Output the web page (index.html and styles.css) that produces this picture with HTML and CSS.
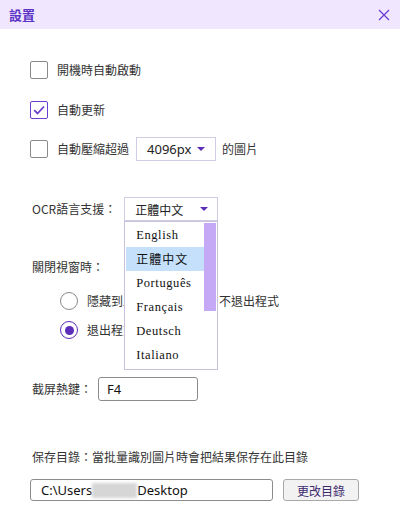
FILE: index.html
```html
<!DOCTYPE html>
<html>
<head>
<meta charset="utf-8">
<link rel="stylesheet" href="styles.css">
</head>
<body>
<div class="win">
  <header class="titlebar">
    <span class="title">設置</span>
    <svg class="close" width="12" height="12" viewBox="0 0 12 12"><path d="M1 1 L11 11 M11 1 L1 11" stroke="#6a3fd0" stroke-width="1.3" fill="none"/></svg>
  </header>
  <main class="content">
    <div class="row r1">
      <span class="cb"></span><span class="lbl">開機時自動啟動</span>
    </div>
    <div class="row r2">
      <span class="cb checked"><svg width="16" height="16" viewBox="0 0 16 16"><path d="M3.2 8.2 L6.5 11.5 L13 4.5" stroke="#6a3fd0" stroke-width="1.8" fill="none"/></svg></span><span class="lbl">自動更新</span>
    </div>
    <div class="row r3">
      <span class="cb"></span><span class="lbl">自動壓縮超過</span>
      <span class="select sel-size"><span class="val">4096px</span><span class="arrow"></span></span>
      <span class="lbl after">的圖片</span>
    </div>
    <div class="row r4">
      <span class="lbl">OCR語言支援：</span>
      <div class="select-wrap">
        <span class="select sel-lang"><span class="val cjk">正體中文</span><span class="arrow"></span></span>
        <ul class="list">
          <li>English</li>
          <li class="hl cjk">正體中文</li>
          <li>Português</li>
          <li>Français</li>
          <li>Deutsch</li>
          <li>Italiano</li>
          <span class="thumb"></span>
        </ul>
      </div>
    </div>
    <div class="row r5"><span class="lbl">關閉視窗時：</span></div>
    <div class="row r6 radio-row">
      <span class="radio"></span><span class="lbl">隱藏到工作列通知區域，不退出程式</span>
    </div>
    <div class="row r7 radio-row">
      <span class="radio on"><span class="dot"></span></span><span class="lbl">退出程式</span>
    </div>
    <div class="row r8">
      <span class="lbl">截屏熱鍵：</span>
      <span class="input hotkey">F4</span>
    </div>
    <div class="row r9"><span class="lbl">保存目錄：當批量識別圖片時會把結果保存在此目錄</span></div>
    <div class="row r10">
      <span class="input path">C:\Users<span class="blur"></span>Desktop</span>
      <span class="btn">更改目錄</span>
    </div>
  </main>
</div>
</body>
</html>
```
FILE: styles.css
```css
* { box-sizing: border-box; }
body {
  margin: 0;
  width: 400px;
  height: 530px;
  background: #fff;
  font-family: "Noto Sans CJK TC", "Noto Sans", sans-serif;
  color: #333;
  font-size: 12px;
}
.titlebar {
  height: 29px;
  background: #f0e7fe;
  display: flex;
  align-items: center;
  justify-content: space-between;
  padding: 0 10px 0 9px;
}
.title {
  color: #5b33c6;
  font-size: 13px;
  font-weight: 700;
}
.close { display: block; }
.content {
  padding-left: 30px;
  display: flex;
  flex-direction: column;
}
.row {
  display: flex;
  align-items: center;
  height: 24px;
}
.r1 { margin-top: 29px; }
.r2 { margin-top: 16px; }
.r3 { margin-top: 15px; }
.r4 { margin-top: 36px; padding-left: 2px; }
.r5 { margin-top: 34px; padding-left: 2px; }
.r6 { margin-top: 10px; }
.r7 { margin-top: 5px; }
.r8 { margin-top: 35px; padding-left: 2px; }
.r9 { margin-top: 44px; padding-left: 2px; }
.r10 { margin-top: 10px; height: 22px; }
.lbl { white-space: nowrap; line-height: 1; }
.cb {
  width: 18px; height: 18px;
  border: 1px solid #8a8a8a;
  border-radius: 2px;
  margin-right: 9px;
  display: flex; align-items: center; justify-content: center;
}
.cb.checked { border-color: #6a3fd0; }
.select {
  display: flex;
  align-items: center;
  justify-content: space-between;
  height: 24px;
  border: 1px solid #d2cbe6;
  background: #fff;
  padding: 0 10px 0 10px;
}
.sel-size { width: 80px; margin-left: 7px; margin-right: 6px; }
.val { font-family: "Noto Sans", "Open Sans", sans-serif; font-size: 13px; color: #222; }
.val.cjk { font-family: "Noto Sans CJK TC", sans-serif; font-size: 12px; }
.arrow {
  width: 0; height: 0;
  border-left: 4px solid transparent;
  border-right: 4px solid transparent;
  border-top: 4px solid #5b2db8;
}
.select-wrap { position: relative; margin-left: 8px; }
.sel-lang { width: 94px; height: 24px; padding: 0 9px 0 10px; }
.list {
  position: absolute;
  left: 0; top: 24px;
  width: 94px;
  margin: 0;
  padding: 1px 0 2px 1px;
  list-style: none;
  background: #fff;
  border: 1px solid #c8c2dc;
  z-index: 5;
}
.list li {
  height: 24px;
  width: 78px;
  line-height: 24px;
  padding-left: 10px;
  font-family: "Liberation Serif", "DejaVu Serif", serif;
  font-size: 12.5px;
  letter-spacing: 0.6px;
  color: #111;
}
.list li.cjk { font-family: "Noto Sans CJK TC", sans-serif; font-size: 12px; letter-spacing: 1px; }
.list li.hl { background: #c4e0fb; }
.thumb {
  position: absolute;
  left: 79px; top: 1px;
  width: 12px; height: 88px;
  background: #c5a9f7;
}
.radio-row { padding-left: 30px; }
.radio {
  width: 18px; height: 18px;
  border: 1px solid #8a8a8a;
  border-radius: 50%;
  margin-right: 9px;
  display: flex; align-items: center; justify-content: center;
}
.radio.on { border: 1.5px solid #5b2db8; }
.dot { width: 9px; height: 9px; border-radius: 50%; background: #5b2db8; }
.input {
  display: flex;
  align-items: center;
  height: 24px;
  border: 1px solid #8c8c8c;
  border-radius: 3px;
  font-family: "Noto Sans", "Open Sans", sans-serif;
  font-size: 13px;
  color: #111;
}
.hotkey { width: 100px; margin-left: 6px; padding-left: 8px; }
.path { width: 243px; height: 22px; padding-left: 10px; }
.blur {
  display: inline-block;
  width: 45px; height: 15px;
  background: #d6d6d6;
  filter: blur(1.5px);
}
.btn {
  margin-left: 10px;
  width: 76px; height: 22px;
  display: flex; align-items: center; justify-content: center;
  background: #f2f2f2;
  border: 1px solid #a8a8a8;
  border-radius: 3px;
  color: #3d2a6e;
  font-size: 12px;
}
```
